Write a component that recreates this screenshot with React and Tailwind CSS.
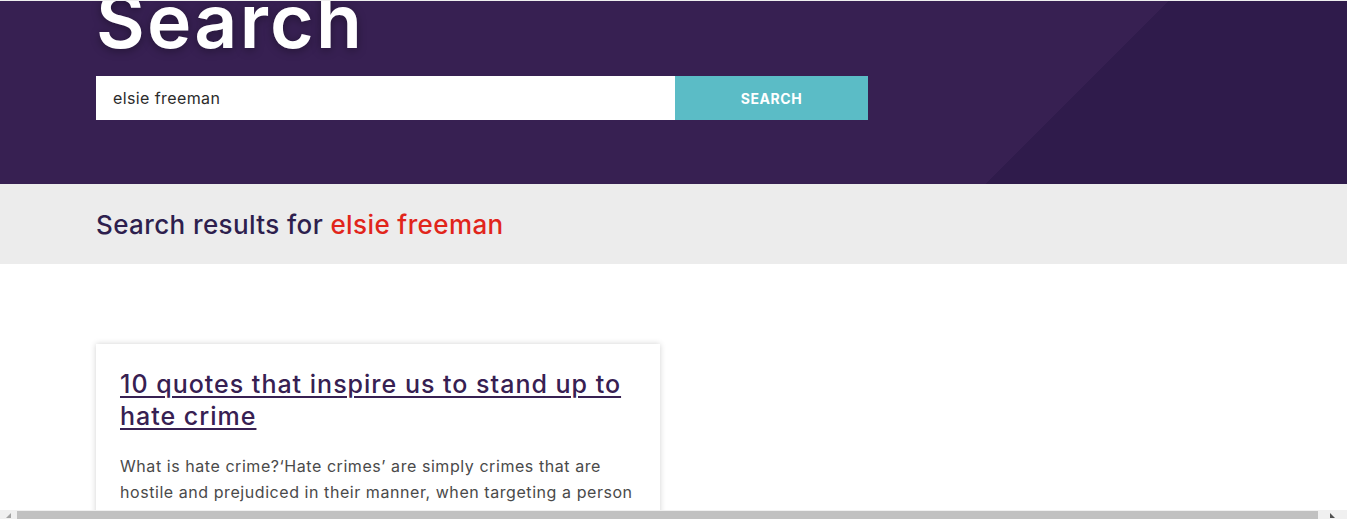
import { useState } from 'react';

const body =
  'What is hate crime?‘Hate crimes’ are simply crimes that are hostile and prejudiced in their manner, when targeting a person based on one or more of their disability, race, religion, sexual orientation or transgender identity.';

const ScrollBar = () => (
  <div className="h-[9px] shrink-0 bg-[#f0f0f0] flex items-center">
    <div className="w-[17px] h-full flex items-end justify-center pb-[1px]">
      <svg width="5" height="5" viewBox="0 0 5 5">
        <path d="M5 0 L5 5 L0 5 Z" fill="#a3a3a3" />
      </svg>
    </div>
    <div className="flex-1 h-full pt-[1px]">
      <div className="h-full bg-[#c1c1c1]" />
    </div>
    <div className="w-[29px] h-full flex items-end justify-center pb-[1px]">
      <svg width="5" height="5" viewBox="0 0 5 5">
        <path d="M0 0 L5 5 L0 5 Z" fill="#505050" />
      </svg>
    </div>
  </div>
);

const App = () => {
  const [query, setQuery] = useState('elsie freeman');

  return (
    <div className="h-[519px] flex flex-col overflow-hidden bg-white font-['Inter',sans-serif]">
      <div className="flex-1 overflow-hidden border-t border-[#efefef]">
        {/* hero */}
        <section className="h-[183px] bg-[linear-gradient(135deg,#372052_826px,#2f1b4b_826px)] overflow-hidden">
          <div className="pl-[96px]">
            <h1 className="-mt-[18px] text-[75px] leading-none font-semibold text-white tracking-[0.03em] [text-shadow:0_2px_10px_rgba(0,0,0,0.35)]">
              Search
            </h1>
            <form
              className="mt-[18px] flex w-[772px] h-[44px]"
              onSubmit={(e) => e.preventDefault()}
            >
              <input
                value={query}
                onChange={(e) => setQuery(e.target.value)}
                className="w-[579px] h-full bg-white pl-[17px] text-[16px] text-[#2b2b2b] tracking-[0.025em] outline-none"
              />
              <button className="flex-1 h-full bg-[#5bbcc6] text-white text-[14px] font-bold tracking-[0.04em] uppercase">
                Search
              </button>
            </form>
          </div>
        </section>

        {/* results heading */}
        <section className="h-[80px] bg-[#ececec] flex items-center pl-[96px]">
          <h2 className="text-[26px] font-medium text-[#2e1f4e] tracking-[0.015em] pt-[1px]">
            Search results for <span className="text-[#e1251b]">elsie freeman</span>
          </h2>
        </section>

        {/* results */}
        <section className="pt-[80px] pl-[96px]">
          <article className="w-[564px] bg-white shadow-[0_0_6px_rgba(0,0,0,0.18)] px-[24px] pt-[24px] pb-[24px]">
            <a
              href="#"
              className="block text-[25px] leading-[32px] font-medium text-[#372052] underline underline-offset-[3px] decoration-[1.5px] tracking-[0.04em]"
            >
              10 quotes that inspire us to stand up to hate crime
            </a>
            <p className="mt-[21px] text-[16px] leading-[26px] text-[#4a4a4a] tracking-[0.035em]">
              {body}
            </p>
          </article>
        </section>
      </div>
      <ScrollBar />
    </div>
  );
};

export default App;
